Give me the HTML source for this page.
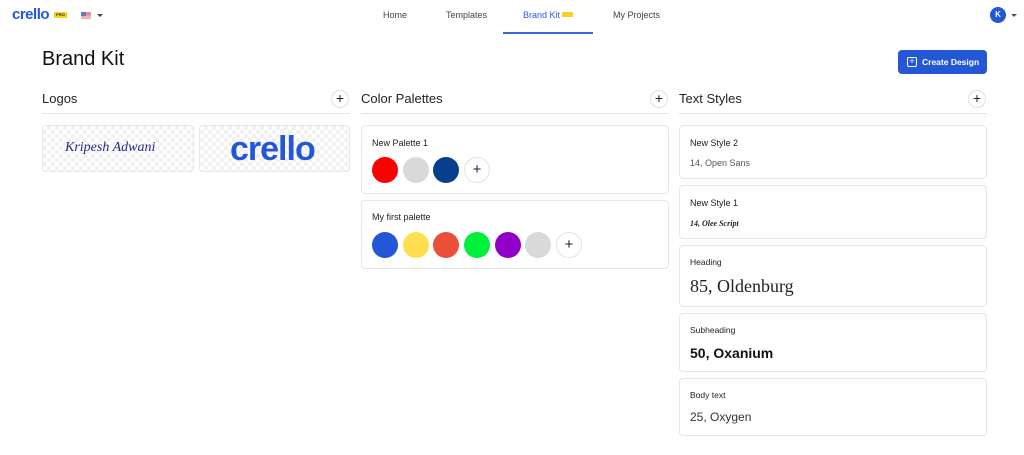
<!DOCTYPE html>
<html><head><meta charset="utf-8"><style>
*{box-sizing:border-box;margin:0;padding:0}
body{width:1024px;height:455px;background:#fff;font-family:"Liberation Sans",sans-serif;color:#222;position:relative;overflow:hidden}
.a{position:absolute}
.nav{font-size:9px;color:#444;top:10px}
.h2{font-size:13px;color:#222;top:91px}
.line{height:1px;background:#e3e3e3;top:113px}
.plus{width:18px;height:18px;border:1px solid #e0e0e0;border-radius:50%;top:90px;text-align:center;font-size:14px;line-height:15px;color:#222}
.card{border:1px solid #e6e6e6;border-radius:4px;background:#fff}
.lc{background-color:#fff;background-image:linear-gradient(45deg,#f1f1f1 25%,transparent 25%,transparent 75%,#f1f1f1 75%),linear-gradient(45deg,#f1f1f1 25%,transparent 25%,transparent 75%,#f1f1f1 75%);background-size:8px 8px;background-position:0 0,4px 4px}
.t{font-size:9px;color:#222;position:absolute;left:10px}
.c{position:absolute;width:26px;height:26px;border-radius:50%}
.cp{border:1px solid #e3e3e3;text-align:center;line-height:23px;font-size:15px;background:#fff}
</style></head><body>
<div class="a" style="left:12px;top:6px;font-size:15px;font-weight:bold;color:#2457d6;letter-spacing:-0.5px">crello</div>
<div class="a" style="left:54px;top:12px;width:13px;height:6px;background:#f7d31f;font-size:4px;font-weight:bold;line-height:6px;text-align:center">PRO</div>
<div class="a" style="left:81px;top:12px;width:10px;height:7px;background:linear-gradient(#e88 0 50%,#f0b4b4 50%);border-radius:1px"><div style="width:5px;height:4px;background:#5a7ad0"></div></div>
<div class="a" style="left:97px;top:14px;border:3px solid transparent;border-top:3px solid #444"></div>
<div class="a nav" style="left:383px">Home</div>
<div class="a nav" style="left:446px">Templates</div>
<div class="a nav" style="left:523px;color:#2e5ad8">Brand Kit</div>
<div class="a" style="left:562px;top:12px;width:11px;height:5px;background:#f7d31f"></div>
<div class="a nav" style="left:613px">My Projects</div>
<div class="a" style="left:503px;top:32px;width:90px;height:2px;background:#3b66d6"></div>
<div class="a" style="left:990px;top:7px;width:16px;height:16px;border-radius:50%;background:#2457d6;color:#fff;font-size:8px;font-weight:bold;text-align:center;line-height:16px">K</div>
<div class="a" style="left:1011px;top:14px;border:3px solid transparent;border-top:3px solid #555"></div>

<div class="a" style="left:42px;top:48px;font-size:20px;color:#111">Brand Kit</div>
<div class="a" style="left:898px;top:50px;width:89px;height:24px;background:#2457d6;border-radius:4px;color:#fff;font-size:8.5px;font-weight:bold;line-height:24px;padding-left:24px">Create Design</div>
<div class="a" style="left:907px;top:57px;width:10px;height:10px;border:1.3px solid #fff;border-radius:2px;color:#fff;font-size:9px;line-height:7px;text-align:center">+</div>

<div class="a h2" style="left:42px">Logos</div>
<div class="a plus" style="left:331px">+</div>
<div class="a line" style="left:42px;width:308px"></div>
<div class="a h2" style="left:361px">Color Palettes</div>
<div class="a plus" style="left:650px">+</div>
<div class="a line" style="left:361px;width:308px"></div>
<div class="a h2" style="left:679px">Text Styles</div>
<div class="a plus" style="left:968px">+</div>
<div class="a line" style="left:679px;width:308px"></div>

<div class="a card lc" style="left:42px;top:125px;width:152px;height:47px"><div style="position:absolute;left:22px;top:14px;font-family:'Liberation Serif',serif;font-style:italic;font-size:14px;color:#2a2a8a">Kripesh Adwani</div></div>
<div class="a card lc" style="left:199px;top:125px;width:151px;height:47px"><div style="position:absolute;left:30px;top:4px;font-size:34px;font-weight:bold;color:#2457d6;letter-spacing:-1px">crello</div></div>

<div class="a card" style="left:361px;top:125px;width:308px;height:69px">
<div class="t" style="top:12px">New Palette 1</div>
<div class="c" style="left:10px;top:31px;background:#f00"></div>
<div class="c" style="left:41px;top:31px;background:#d9d9d9"></div>
<div class="c" style="left:71px;top:31px;background:#073e8e"></div>
<div class="c cp" style="left:102px;top:31px">+</div>
</div>
<div class="a card" style="left:361px;top:200px;width:308px;height:69px">
<div class="t" style="top:11px">My first palette</div>
<div class="c" style="left:10px;top:31px;background:#2457d6"></div>
<div class="c" style="left:41px;top:31px;background:#ffdf4f"></div>
<div class="c" style="left:71px;top:31px;background:#ea4f37"></div>
<div class="c" style="left:102px;top:31px;background:#00ef3a"></div>
<div class="c" style="left:133px;top:31px;background:#9000c8"></div>
<div class="c" style="left:163px;top:31px;background:#d9d9d9"></div>
<div class="c cp" style="left:194px;top:31px">+</div>
</div>

<div class="a card" style="left:679px;top:125px;width:308px;height:54px">
<div class="t" style="top:12px">New Style 2</div>
<div class="t" style="top:32px;color:#555">14, Open Sans</div></div>
<div class="a card" style="left:679px;top:185px;width:308px;height:54px">
<div class="t" style="top:12px">New Style 1</div>
<div class="t" style="top:33px;font-family:'Liberation Serif',serif;font-style:italic;font-weight:bold;font-size:8px">14, Olee Script</div></div>
<div class="a card" style="left:679px;top:245px;width:308px;height:62px">
<div class="t" style="top:11px;font-size:8.5px">Heading</div>
<div class="t" style="top:30px;font-family:'Liberation Serif',serif;font-size:18px;color:#222">85, Oldenburg</div></div>
<div class="a card" style="left:679px;top:313px;width:308px;height:59px">
<div class="t" style="top:11px;font-size:8.5px">Subheading</div>
<div class="t" style="top:31px;font-size:14px;font-weight:bold;color:#111">50, Oxanium</div></div>
<div class="a card" style="left:679px;top:378px;width:308px;height:58px">
<div class="t" style="top:11px;font-size:8.5px">Body text</div>
<div class="t" style="top:31px;font-size:12px;color:#333">25, Oxygen</div></div>
</body></html>
